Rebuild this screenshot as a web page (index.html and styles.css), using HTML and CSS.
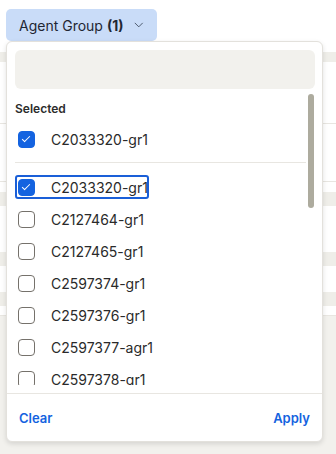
FILE: index.html
```html
<!DOCTYPE html>
<html lang="en">
<head>
  <meta charset="UTF-8"/>
  <meta name="viewport" content="width=device-width,initial-scale=1"/>
  <title>Agent Group filter</title>
  <link rel="stylesheet" href="styles.css">
</head>
<body>
  <div class="page">
    <!-- table behind the popover -->
    <div class="backdrop">
      <div class="bd-top"></div>
      <div class="bd-band"></div>
      <div class="bd-row h62 line"></div>
      <div class="bd-row h58 line"></div>
      <div class="bd-row h10"></div>
      <div class="bd-band b14"></div>
      <div class="bd-row h46"></div>
      <div class="bd-band b14"></div>
      <div class="bd-row h26"></div>
      <div class="bd-band b14"></div>
      <div class="bd-row h10 line"></div>
      <div class="bd-rest"></div>
    </div>

    <div class="filter">
      <button class="filter-btn"><span>Agent Group <b>(1)</b></span>
        <svg width="13" height="8" viewBox="0 0 13 8"><path d="M1.5 1.5l5 5 5-5" fill="none" stroke="#3d4a5c" stroke-width="1.2" stroke-linecap="round" stroke-linejoin="round"/></svg>
      </button>

      <div class="menu">
        <input class="search" type="text" aria-label="Search"/>
        <div class="scroll">
          <div class="group-label">Selected</div>
          <div class="opt"><label><span class="box on"></span>C2033320-gr1</label></div>
          <hr class="sep"/>
          <div class="opt"><label class="focus"><span class="box on"></span>C2033320-gr1</label></div>
          <div class="opt"><label><span class="box"></span>C2127464-gr1</label></div>
          <div class="opt"><label><span class="box"></span>C2127465-gr1</label></div>
          <div class="opt"><label><span class="box"></span>C2597374-gr1</label></div>
          <div class="opt"><label><span class="box"></span>C2597376-gr1</label></div>
          <div class="opt"><label><span class="box"></span>C2597377-agr1</label></div>
          <div class="opt"><label><span class="box"></span>C2597378-gr1</label></div>
          <div class="thumb"></div>
        </div>
        <div class="menu-foot">
          <button class="link">Clear</button>
          <button class="link">Apply</button>
        </div>
      </div>
    </div>
  </div>
</body>
</html>
```

FILE: styles.css
```css
:root {
  --text: #2a2a2a;
  --blue: #1463e0;
  --line: #e8e6e1;
  --soft: #f2f1ed;
}
*, *::before, *::after { margin:0; padding:0; box-sizing:border-box; }
body { font-family:'Inter',sans-serif; color:var(--text); background:#fff; }
.page { position:relative; width:336px; height:454px; overflow:hidden; }

/* background table */
.backdrop { display:flex; flex-direction:column; height:100%; }
.bd-top { height:52px; }
.bd-band { height:10px; background:#efeee9; }
.bd-band.b14 { height:14px; }
.bd-row.h62 { height:62px; }
.bd-row.h58 { height:58px; }
.bd-row.h46 { height:46px; }
.bd-row.h26 { height:26px; }
.bd-row.h10 { height:10px; }
.bd-row.line { border-bottom:1px solid var(--line); }
.bd-rest { flex:1; background:var(--soft); }

/* filter popover */
.filter { position:absolute; top:9px; left:6px; }
.filter-btn {
  display:flex; align-items:center; gap:11px;
  width:151px; height:32px; padding:0 13px;
  border:none; border-radius:5px; background:#c9dcf8;
  font:14px 'Inter',sans-serif; color:#1f2733; cursor:pointer;
  white-space:nowrap;
}
.filter-btn b { font-weight:700; }
.menu {
  width:317px; background:#fff;
  border:1px solid #e3e1dc; border-radius:6px;
  box-shadow:0 2px 5px rgba(0,0,0,.12);
  padding-top:8px;
}
.search {
  display:block; width:300px; height:39px; margin-left:8px;
  background:var(--soft); border:none; border-radius:6px;
}
.scroll { position:relative; height:296px; overflow:hidden; padding:12px 16px 0 8px; }
.group-label { font-size:12px; font-weight:600; line-height:16px; margin-bottom:6px; color:#2c2c2c; }
.opt { height:32px; display:flex; align-items:center; }
.opt label {
  display:inline-flex; align-items:center; gap:16px;
  height:24px; padding:0 1px 0 3px;
  font-size:14px; color:var(--text); border-radius:3px; white-space:nowrap;
}
.opt label.focus { outline:2px solid #1a5fd8; outline-offset:-2px; }
.box { width:17px; height:17px; border:1.5px solid #75716b; border-radius:4px; position:relative; flex:none; }
.box.on { background:var(--blue); border-color:var(--blue); }
.box.on::after {
  content:''; position:absolute; left:5px; top:2px; width:4px; height:8px;
  border:solid #fff; border-width:0 1.6px 1.6px 0; transform:rotate(45deg);
}
.sep { border:none; border-top:1px solid var(--line); margin:7px 0 8px; }
.thumb { position:absolute; top:5px; right:8px; width:6px; height:114px; border-radius:3px; background:#adab9e; }

.menu-foot {
  margin-top:8px; height:48px; border-top:1px solid var(--line);
  display:flex; align-items:center; justify-content:space-between; padding:0 12px;
}
.link { background:none; border:none; font:600 13px 'Inter',sans-serif; color:var(--blue); cursor:pointer; }
```
